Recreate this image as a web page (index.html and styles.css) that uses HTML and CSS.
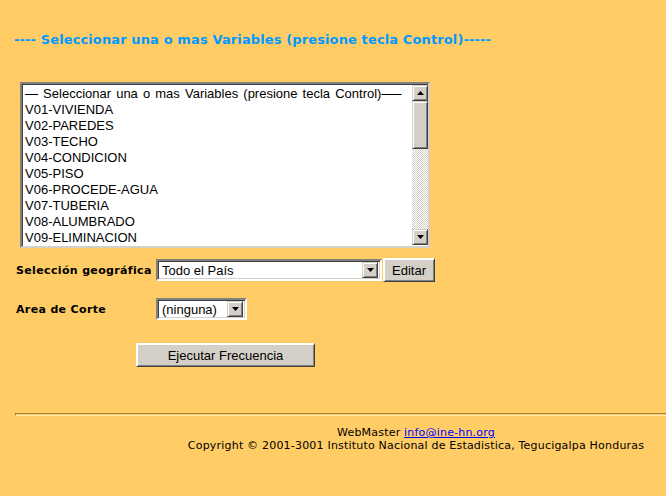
FILE: index.html
```html
<!DOCTYPE html>
<html>
<head>
<meta charset="utf-8">
<link rel="stylesheet" href="styles.css">
</head>
<body>
<div class="page">
  <p class="title">---- Seleccionar una o mas Variables (presione tecla Control)-----</p>

  <div class="listbox">
    <div class="items">
      <div class="item item-head"><span class="dash">—</span> Seleccionar una o mas Variables (presione tecla Control)<span class="dash dash-end">——</span></div>
      <div class="item">V01-VIVIENDA</div>
      <div class="item">V02-PAREDES</div>
      <div class="item">V03-TECHO</div>
      <div class="item">V04-CONDICION</div>
      <div class="item">V05-PISO</div>
      <div class="item">V06-PROCEDE-AGUA</div>
      <div class="item">V07-TUBERIA</div>
      <div class="item">V08-ALUMBRADO</div>
      <div class="item">V09-ELIMINACION</div>
    </div>
    <div class="vscroll">
      <div class="sbtn">
        <svg width="7" height="4" viewBox="0 0 7 4"><path d="M3.5 0 L7 4 L0 4 Z" fill="#000"/></svg>
      </div>
      <div class="thumb"></div>
      <div class="track"></div>
      <div class="sbtn">
        <svg width="7" height="4" viewBox="0 0 7 4"><path d="M0 0 L7 0 L3.5 4 Z" fill="#000"/></svg>
      </div>
    </div>
  </div>

  <div class="form-row row-geo">
    <span class="label">Selección geográfica</span>
    <div class="combo combo-geo">
      <span class="combo-text">Todo el País</span>
      <span class="combo-btn"><svg width="7" height="4" viewBox="0 0 7 4"><path d="M0 0 L7 0 L3.5 4 Z" fill="#000"/></svg></span>
    </div>
    <span class="btn btn-edit">Editar</span>
  </div>

  <div class="form-row row-area">
    <span class="label">Area de Corte</span>
    <div class="combo combo-area">
      <span class="combo-text">(ninguna)</span>
      <span class="combo-btn"><svg width="7" height="4" viewBox="0 0 7 4"><path d="M0 0 L7 0 L3.5 4 Z" fill="#000"/></svg></span>
    </div>
  </div>

  <div class="run-row">
    <span class="btn btn-run">Ejecutar Frecuencia</span>
  </div>

  <div class="rule"></div>

  <div class="footer">
    <div>WebMaster <a href="#">info@ine-hn.org</a></div>
    <div>Copyright © 2001-3001 Instituto Nacional de Estadistica, Tegucigalpa Honduras</div>
  </div>
</div>
</body>
</html>
```

FILE: styles.css
```css
html, body {
  margin: 0;
  padding: 0;
  background: #ffcc66;
  overflow: hidden;
}

.page {
  width: 666px;
  height: 496px;
  font-family: "DejaVu Sans", Verdana, sans-serif;
}

.title {
  margin: 0;
  padding: 32px 0 0 14px;
  height: 16px;
  line-height: 16px;
  font-size: 13px;
  letter-spacing: 0.12px;
  font-weight: bold;
  color: #0099ff;
  white-space: nowrap;
}

.listbox {
  margin: 34px 0 0 20px;
  width: 406px;
  height: 162px;
  display: flex;
  background: #fff;
  border-top: 2px solid #808080;
  border-left: 2px solid #808080;
  border-right: 2px solid #d4d0c8;
  border-bottom: 2px solid #d4d0c8;
  box-shadow: inset 1px 1px 0 #404040;
}

.items {
  flex: 1;
  padding: 2px 0 0 3px;
  font-family: "Liberation Sans", Arial, sans-serif;
  font-size: 13px;
  color: #000;
  overflow: hidden;
}

.item {
  height: 16px;
  line-height: 16px;
  white-space: nowrap;
}

.item-head {
  word-spacing: 1.5px;
}

.dash-end {
  letter-spacing: -6px;
}

.vscroll {
  width: 16px;
  display: flex;
  flex-direction: column;
  margin: 1px 0 1px 0;
}

.sbtn {
  width: 16px;
  height: 16px;
  box-sizing: border-box;
  background: #d4d0c8;
  border-top: 1px solid #d4d0c8;
  border-left: 1px solid #d4d0c8;
  border-right: 1px solid #404040;
  border-bottom: 1px solid #404040;
  box-shadow: inset 1px 1px 0 #fff, inset -1px -1px 0 #808080;
  display: flex;
  align-items: center;
  justify-content: center;
}

.thumb {
  height: 48px;
  box-sizing: border-box;
  background: #d4d0c8;
  border-top: 1px solid #d4d0c8;
  border-left: 1px solid #d4d0c8;
  border-right: 1px solid #404040;
  border-bottom: 1px solid #404040;
  box-shadow: inset 1px 1px 0 #fff, inset -1px -1px 0 #808080;
}

.track {
  flex: 1;
  background-color: #fff;
  background-image: repeating-conic-gradient(#d4d0c8 0 25%, #fff 0 50%);
  background-size: 2px 2px;
}

.form-row {
  display: flex;
  align-items: center;
  padding-left: 16px;
}

.row-geo {
  margin-top: 10px;
  height: 24px;
}

.row-area {
  margin-top: 15px;
  height: 24px;
}

.label {
  width: 140px;
  font-size: 11px;
  letter-spacing: 0.35px;
  font-weight: bold;
  color: #000;
  white-space: nowrap;
}

.combo {
  height: 22px;
  box-sizing: border-box;
  display: flex;
  align-items: center;
  background: #fff;
  border-top: 2px solid #808080;
  border-left: 2px solid #808080;
  border-right: 2px solid #fff;
  border-bottom: 2px solid #fff;
  box-shadow: inset 1px 1px 0 #404040, inset -1px -1px 0 #d4d0c8;
  padding: 1px 2px 1px 4px;
}

.combo-geo {
  width: 226px;
}

.combo-area {
  width: 91px;
}

.combo-text {
  flex: 1;
  font-family: "Liberation Sans", Arial, sans-serif;
  font-size: 13px;
  color: #000;
  white-space: nowrap;
}

.combo-btn {
  width: 16px;
  height: 16px;
  box-sizing: border-box;
  background: #d4d0c8;
  border-top: 1px solid #d4d0c8;
  border-left: 1px solid #d4d0c8;
  border-right: 1px solid #404040;
  border-bottom: 1px solid #404040;
  box-shadow: inset 1px 1px 0 #fff, inset -1px -1px 0 #808080;
  display: flex;
  align-items: center;
  justify-content: center;
}

.btn {
  box-sizing: border-box;
  display: inline-flex;
  align-items: center;
  justify-content: center;
  background: #d4d0c8;
  font-family: "Liberation Sans", Arial, sans-serif;
  font-size: 13px;
  color: #000;
  border-top: 1px solid #fff;
  border-left: 1px solid #fff;
  border-right: 1px solid #404040;
  border-bottom: 1px solid #404040;
  box-shadow: inset 1px 1px 0 #fff, inset -1px -1px 0 #808080;
}

.btn-edit {
  width: 52px;
  height: 24px;
  margin-left: 1px;
}

.run-row {
  padding-left: 136px;
  margin-top: 22px;
  height: 24px;
}

.btn-run {
  width: 179px;
  height: 24px;
}

.rule {
  margin: 46px 0 0 15px;
  height: 1px;
  border-top: 1px solid #a27c35;
  border-left: 1px solid #a27c35;
  border-bottom: 1px solid #ffe9b0;
}

.footer {
  margin: 10px 0 0 166px;
  width: 500px;
  text-align: center;
  font-size: 11px;
  letter-spacing: 0.2px;
  line-height: 13px;
  color: #000;
}

.footer a {
  color: #0000ff;
}
```
